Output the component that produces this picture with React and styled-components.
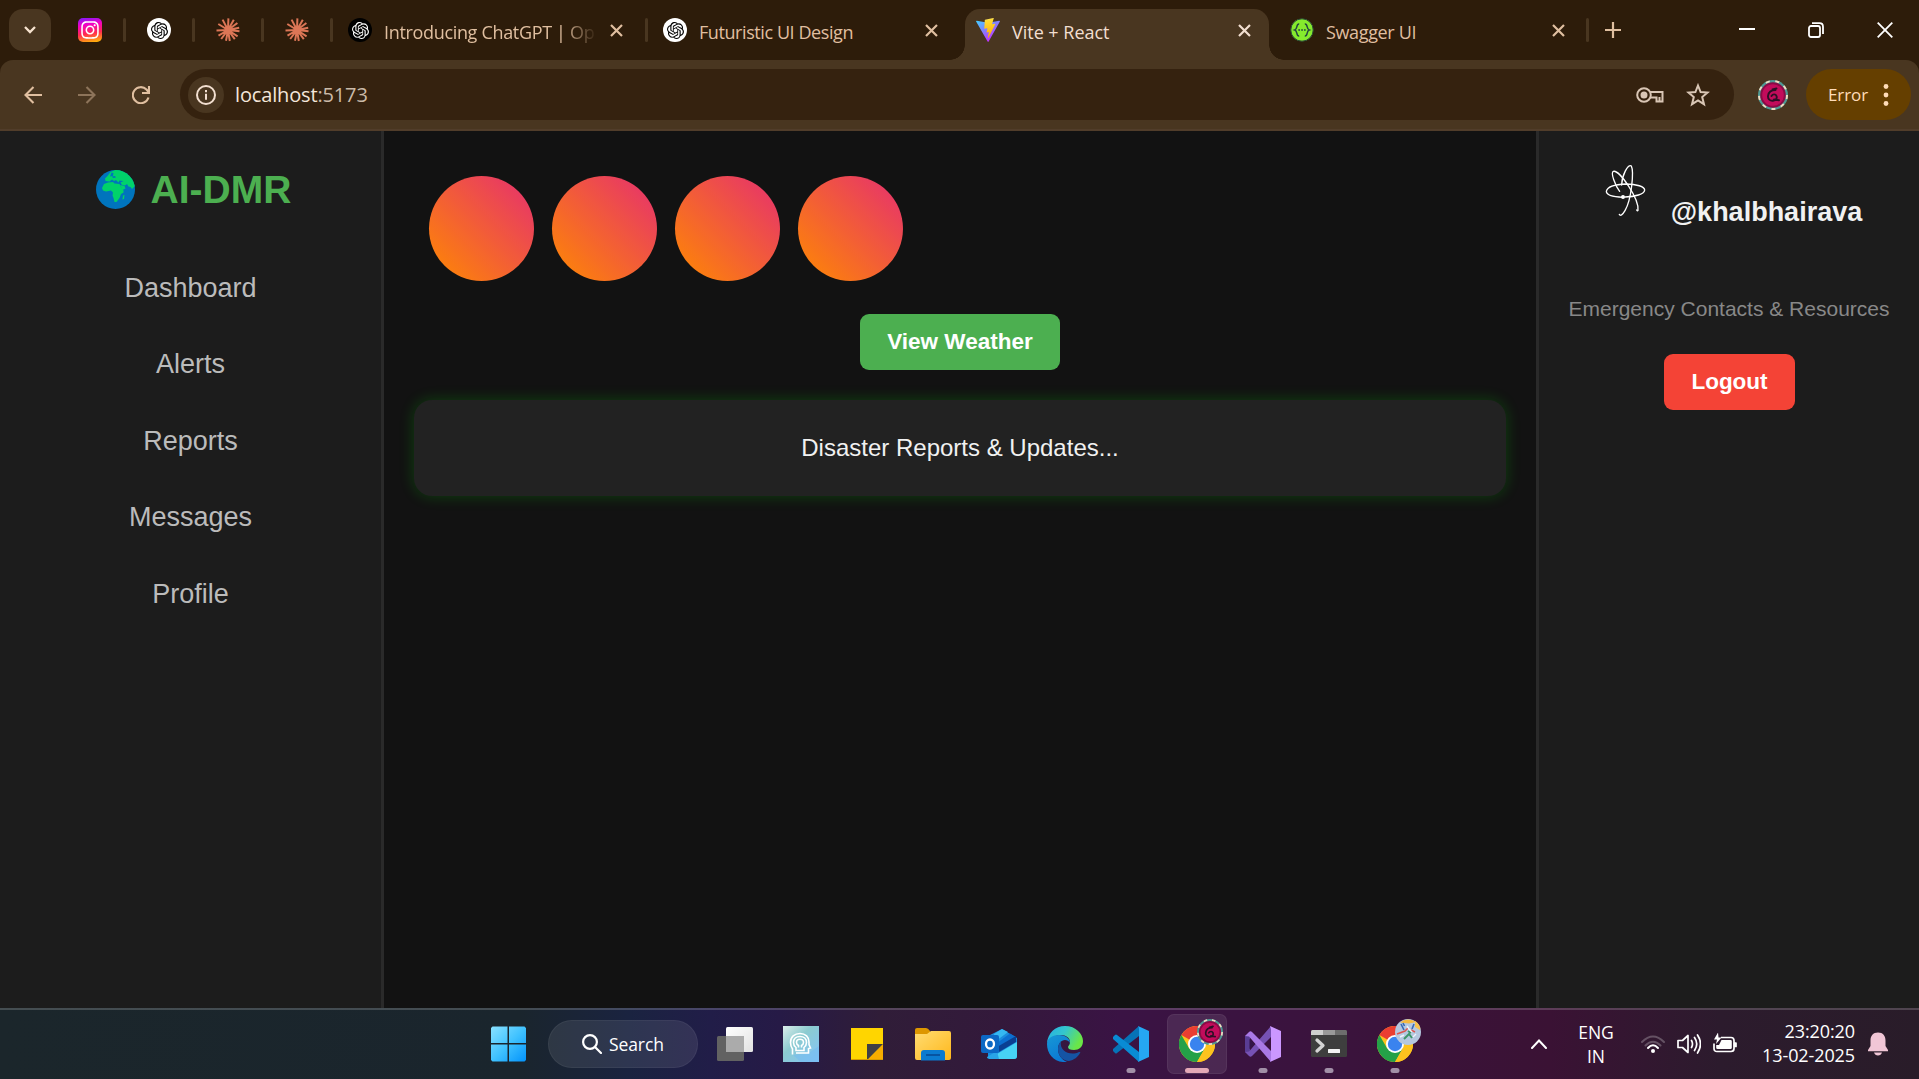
import React from "react";
import styled, { createGlobalStyle, css } from "styled-components";
import { SiOpenai } from "react-icons/si";
import { FaInstagram } from "react-icons/fa";

const GlobalStyle = createGlobalStyle`
  * { box-sizing: border-box; }
  html, body, #root { height: 100%; margin: 0; }
  body { overflow: hidden; background: #121212; }
  svg { display: block; flex: none; }
  h1, h2, p { margin: 0; }
`;

const systemFont = css`
  font-family: "Open Sans", "Noto Sans", sans-serif;
`;

const Screen = styled.div`
  width: 1919px;
  height: 1079px;
  display: flex;
  flex-direction: column;
  font-family: "Liberation Sans", Arial, sans-serif;
`;

/* ---------- Browser ---------- */

const TabStrip = styled.div`
  ${systemFont}
  height: 60px;
  flex: none;
  display: flex;
  align-items: center;
  padding-left: 9px;
  background: #2d1c0a;
  color: #e0bfa0;
`;

const TabSearch = styled.div`
  width: 42px;
  height: 42px;
  margin-right: 6px;
  border-radius: 14px;
  background: #493620;
  display: flex;
  align-items: center;
  justify-content: center;
`;

const Separator = styled.span`
  width: 3px;
  height: 24px;
  margin-left: auto;
  border-radius: 2px;
  background: #493620;
`;

const PinnedTab = styled.div`
  width: 69px;
  height: 100%;
  padding-left: 21px;
  display: flex;
  align-items: center;
`;

const Tab = styled.div`
  width: ${(p) => p.$width}px;
  height: 51px;
  margin-top: 9px;
  padding: 0 0 9px ${(p) => p.$pad}px;
  display: flex;
  align-items: center;
  position: relative;
  ${(p) =>
    p.$active &&
    css`
      background: #493620;
      color: #f2dfd0;
      border-radius: 15px 15px 0 0;
      &::before,
      &::after {
        content: "";
        position: absolute;
        bottom: 0;
        width: 15px;
        height: 15px;
      }
      &::before {
        left: -15px;
        background: radial-gradient(circle at 0 0, transparent 14.5px, #493620 15px);
      }
      &::after {
        right: -15px;
        background: radial-gradient(circle at 100% 0, transparent 14.5px, #493620 15px);
      }
    `}
`;

const TabTitle = styled.span`
  width: 211px;
  margin: 3px 15px 0 12px;
  font-size: 18px;
  line-height: 24px;
  letter-spacing: ${(p) => p.$spacing}px;
  white-space: nowrap;
  ${(p) => p.$fade && css`mask-image: linear-gradient(to right, #000 84%, transparent 101%);`}
`;

const Favicon = styled.span`
  width: 24px;
  height: 24px;
  flex: none;
  border-radius: ${(p) => p.$radius || "50%"};
  background: ${(p) => p.$bg || "none"};
  color: ${(p) => p.$fg || "#000"};
  display: flex;
  align-items: center;
  justify-content: center;
`;

const NewTab = styled.div`
  margin-left: 16px;
`;

const WindowControls = styled.div`
  margin-left: auto;
  padding-right: 26px;
  display: flex;
  align-items: center;
  gap: 53px;
`;

const ToolbarBack = styled.div`
  background: #2d1c0a;
  flex: none;
`;

const Toolbar = styled.div`
  ${systemFont}
  height: 71px;
  padding: 9px 8px 0 24px;
  display: flex;
  align-items: flex-start;
  border-radius: 13px 13px 0 0;
  box-shadow: inset 0 -2px #513d2a;
  background: #493620;
  color: #e0bfa0;
`;

const NavButtons = styled.div`
  width: 156px;
  height: 51px;
  display: flex;
  align-items: center;
  gap: 36px;
`;

const AddressBar = styled.div`
  width: 1554px;
  height: 51px;
  padding: 0 24px 0 8px;
  border-radius: 26px;
  background: #35220f;
  display: flex;
  align-items: center;
`;

const SiteInfo = styled.div`
  width: 36px;
  height: 36px;
  margin-right: 11px;
  border-radius: 50%;
  background: #493620;
  display: flex;
  align-items: center;
  justify-content: center;
`;

const Url = styled.span`
  flex: 1;
  font-size: 20px;
  letter-spacing: -0.15px;
  color: #f4e6da;
  span { color: #cbbba9; }
`;

const AddressIcons = styled.div`
  display: flex;
  align-items: center;
  gap: 22px;
`;

const ProfileSlot = styled.div`
  width: 72px;
  height: 51px;
  padding-left: 5px;
  display: flex;
  align-items: center;
  justify-content: center;
`;

const ErrorPill = styled.div`
  width: 105px;
  height: 51px;
  padding: 0 22px 0 22px;
  border-radius: 26px;
  background: #653f00;
  color: #ffdcb8;
  display: flex;
  align-items: center;
  justify-content: space-between;
  font-size: 17px;
  letter-spacing: -0.1px;
`;

/* ---------- Page ---------- */

const Page = styled.div`
  height: 877px;
  flex: none;
  display: grid;
  grid-template-columns: 384px 1fr 383px;
  background: #121212;
  color: #f1f1f1;
`;

const Sidebar = styled.aside`
  background: #1c1c1c;
  border-right: 3px solid #2a2a2a;
  padding-top: 36px;
  display: flex;
  flex-direction: column;
  align-items: center;
`;

const Brand = styled.h1`
  height: 45px;
  padding-left: 6px;
  display: flex;
  align-items: center;
  gap: 16px;
  font-size: 39px;
  line-height: 45px;
  color: #4caf50;
`;

const Menu = styled.nav`
  margin-top: 37.6px;
  display: flex;
  flex-direction: column;
  align-items: center;
`;

const MenuItem = styled.a`
  height: 76.6px;
  font-size: 27px;
  line-height: 76.6px;
  color: #bbbbbb;
`;

const Main = styled.main`
  padding: 45px 30px 0;
  display: flex;
  flex-direction: column;
`;

const Stories = styled.div`
  display: flex;
  gap: 18px;
  padding-left: 15px;
`;

const Story = styled.div`
  width: 105px;
  height: 105px;
  border-radius: 50%;
  background: linear-gradient(45deg, #ff8a00, #e52e71);
`;

const Button = styled.button`
  width: ${(p) => p.$width}px;
  height: 56px;
  align-self: center;
  padding: 0 0 1px;
  border: 0;
  border-radius: 9px;
  background: ${(p) => p.$color};
  color: #fff;
  font: bold 22.5px "Liberation Sans", Arial, sans-serif;
  margin: ${(p) => p.$margin};
`;

const ReportCard = styled.section`
  height: 96px;
  border-radius: 18px;
  background: #222;
  box-shadow: 0 0 15px rgba(0, 255, 0, 0.2);
  text-align: center;
  font-size: 24px;
  line-height: 95px;
`;

const RightPanel = styled.aside`
  background: #1c1c1c;
  border-left: 3px solid #2a2a2a;
  padding-top: 33px;
  display: flex;
  flex-direction: column;
  align-items: center;
`;

const UserRow = styled.div`
  height: 66px;
  padding-left: 9px;
  display: flex;
  align-items: flex-start;
  gap: 24px;
`;

const Handle = styled.h2`
  margin-top: 33px;
  font-size: 27px;
  line-height: 31px;
`;

const Muted = styled.p`
  margin-top: 67px;
  font-size: 21px;
  line-height: 24px;
  color: #888;
`;

/* ---------- Taskbar ---------- */

const Taskbar = styled.div`
  ${systemFont}
  height: 71px;
  flex: none;
  display: flex;
  align-items: flex-start;
  padding: 4px 31px 0 476px;
  border-top: 2px solid rgba(255, 255, 255, 0.18);
  background: linear-gradient(
    to right,
    #1b262b 0, #1a252d 520px, #1a2340 630px, #211d48 710px, #261a46 780px,
    #301d38 880px, #33193b 1000px, #3a1344 1120px, #3a133c 1350px, #3a1234 1550px, #2c1b2d 1720px, #291c29 1919px
  );
  background-origin: border-box;
  color: #fff;
`;

const TaskItem = styled.div`
  width: 66px;
  height: 60px;
  display: flex;
  align-items: center;
  justify-content: center;
  position: relative;
  ${(p) =>
    p.$active &&
    css`
      &::before {
        content: "";
        position: absolute;
        inset: 0 3px;
        border-radius: 7px;
        border: 1px solid rgba(255, 255, 255, 0.06);
        background: rgba(255, 255, 255, 0.09);
      }
    `}
  ${(p) =>
    p.$dot &&
    css`
      &::after {
        content: "";
        position: absolute;
        bottom: 1px;
        left: 50%;
        transform: translateX(-50%);
        width: ${p.$active ? 24 : 9}px;
        height: 5px;
        border-radius: 3px;
        background: ${p.$active ? "#e3a9b7" : "#a18fa7"};
      }
    `}
  > svg { position: relative; }
`;

const BadgeSlot = styled.span`
  position: absolute;
  top: 5px;
  right: 7px;
`;

const SearchPill = styled.div`
  width: 150px;
  height: 48px;
  margin: 6px 4px 0 6px;
  padding-left: 33px;
  border-radius: 24px;
  border: 1px solid rgba(255, 255, 255, 0.05);
  background: rgba(255, 255, 255, 0.09);
  display: flex;
  align-items: center;
  gap: 7px;
  font-size: 17.500px;
  letter-spacing: -0.1px;
`;

const Tray = styled.div`
  height: 60px;
  margin-left: auto;
  display: flex;
  align-items: center;
`;

const TrayText = styled.div`
  width: ${(p) => p.$width}px;
  text-align: ${(p) => p.$align};
  font-size: ${(p) => p.$size}px;
  line-height: 24px;
  letter-spacing: ${(p) => p.$spacing}px;
  white-space: nowrap;
  margin: 0 ${(p) => p.$right}px ${(p) => p.$bottom}px ${(p) => p.$left}px;
`;

const TrayIcons = styled.div`
  display: flex;
  gap: 12px;
  align-items: center;
`;

/* ---------- Icons ---------- */

const Stroke = ({ w, h, box, width = 2, children, color = "currentColor", ...rest }) => (
  <svg width={w} height={h} viewBox={box || `0 0 ${w} ${h}`} fill="none" stroke={color} strokeWidth={width} {...rest}>
    {children}
  </svg>
);

const CloseIcon = () => (
  <Stroke w={13} h={13} width={2.2}><path d="M1 1 12 12M12 1 1 12" /></Stroke>
);

const ClaudeIcon = () => (
  <svg width="24" height="24" viewBox="-12 -12 24 24" stroke="#dc7656" strokeWidth="2">
    <path d="M0 0 .4-11.6M0 0 5.8-10.2M0 0 9.4-7M0 0 11.2-2.2M0 0 11.5 1.3M0 0 9.6 6.3M0 0 6.8 9.2M0 0 1.8 11M0 0-2 10.7M0 0-6.8 9M0 0-9.5 5.7M0 0-11.5.4M0 0-9.7-6M0 0-5.4-10.4" />
    <circle r="3.4" fill="#dc7656" stroke="none" />
  </svg>
);

const ViteIcon = () => (
  <svg width="24" height="24" viewBox="0 0 256 257">
    <defs>
      <linearGradient id="viteBlue" x1="0" y1="0" x2=".6" y2=".9"><stop offset="0" stopColor="#41d1ff" /><stop offset="1" stopColor="#bd34fe" /></linearGradient>
      <linearGradient id="viteGold" x1=".4" y1="0" x2=".5" y2="1"><stop offset="0" stopColor="#ffea83" /><stop offset=".1" stopColor="#ffdd35" /><stop offset="1" stopColor="#ffa800" /></linearGradient>
    </defs>
    <path fill="url(#viteBlue)" d="M255.2 37.9 134.9 252.9c-2.5 4.4-8.9 4.5-11.4 0L.9 37.9c-2.7-4.8 1.4-10.6 6.8-9.6l120.4 21.5c.8.1 1.6.1 2.3 0l117.9-21.5c5.4-1 9.6 4.8 6.9 9.6Z" />
    <path fill="url(#viteGold)" d="M185.4.1 96.4 17.5a3.3 3.3 0 0 0-2.6 3l-5.5 92.5a3.3 3.3 0 0 0 4 3.4l24.8-5.7c2.3-.5 4.4 1.5 3.9 3.8l-7.4 36.1c-.5 2.4 1.8 4.5 4.1 3.8l15.4-4.7c2.3-.7 4.6 1.4 4.1 3.8l-11.7 56.8c-.7 3.6 4 5.5 6 2.5l1.4-2.1 72.6-144.9c1.2-2.4-.9-5.2-3.6-4.7l-25.5 4.9c-2.4.5-4.4-1.7-3.8-4.1L189.2 4.2c.7-2.3-1.4-4.6-3.8-4.1Z" />
  </svg>
);

const SwaggerIcon = () => (
  <svg width="24" height="24" viewBox="0 0 24 24">
    <circle cx="12" cy="12" r="11.2" fill="#85ea2d" stroke="#2b4a3a" strokeWidth="1" />
    <path d="M9.2 6C6 5.600 7.800 11 4.800 12 7.800 13 6 18.400 9.200 18M14.800 6C18 5.600 16.200 11 19.200 12 16.200 13 18 18.400 14.800 18" fill="none" stroke="#24463f" strokeWidth="1.5" />
    <path d="M8.300 12h1.700M11.200 12h1.700M14 12h1.700" stroke="#24463f" strokeWidth="1.500" />
  </svg>
);

const CrimsonAvatar = ({ size }) => (
  <svg width={size} height={size} viewBox="0 0 30 30">
    <circle cx="15" cy="15" r="15" fill="#4f9a94" />
    <circle cx="15" cy="15" r="14" fill="none" stroke="#f1dcc2" strokeWidth="2" strokeDasharray="4 5.7" />
    <circle cx="15" cy="15" r="12.8" fill="#8a0b45" />
    <circle cx="15" cy="15" r="10.8" fill="#c20c5b" />
    <path d="M17.500 10c-4 0-7 2-7.500 6-.3 3 2 5 5 4.700 3-.3 4.300-2.500 3.500-4.700-.8-2-3.700-2.200-5 0M16 19.500l5 .8M14.500 9.500l4-1" fill="none" stroke="#2b1025" strokeWidth="1.900" strokeLinecap="round" />
  </svg>
);

const GlobeIcon = () => (
  <svg width="39" height="39" viewBox="0 0 39 39">
    <defs><clipPath id="globeDisc"><circle cx="19.5" cy="19.5" r="19.5" /></clipPath></defs>
    <g clipPath="url(#globeDisc)">
      <rect width="39" height="39" fill="#0074bd" />
      <path fill="#00d26a" d="M9.500 11 9 8.500 11.500 6l3-4 6-2.500H39V16l-3 3-1.500-2-2-.5-1.500-2.500-2 1.500-3-.5-1.500-2.500 3-1.500-4-.5-1 2-2.500-2.500-2 1-2-1.500-2.500 2Z" />
      <path fill="#0074bd" d="m14 6.500 1.500-4 2 .5-.5 3ZM16 6.500l3-.5 1 1.500-3 .5Z" />
      <path fill="#00d26a" d="M6 18 8 14 12 12.500 17 12l1.500 1.500 5 .5 1.500 3 2.500 3.500v2L25 24l-1.500 4-3 4h-2L17.500 28 16.500 25.500 17 22.500 15 20.500l-5 1-3-1Z" />
      <path fill="#00d26a" d="m24 15 2.500 5 3-1.500-1-2.500Z" />
      <path fill="#00d26a" d="m27 25.500 1.500-.5-.5 4-1.500.5Z" />
    </g>
  </svg>
);

const ScribbleIcon = () => (
  <svg width="42" height="54" viewBox="255 100 126 162" fill="none" stroke="#fff" strokeWidth="4" strokeLinecap="round">
    <path d="M299 182C286 166 271 126 280 122 298 116 358 205 354 239Q352 242 350 238" />
    <path d="M305 163C305 136 324 98 334 106 342 122 335 205 315 240Q303 260 298 251" />
    <path d="M309 200C281 199 259 194 259 182 262 168 288 161 318 160 350 160 374 168 374 178 373 191 345 198 315 199" />
    <circle cx="309" cy="199" r="4" fill="#fff" />
  </svg>
);

const WindowsIcon = () => (
  <svg width="36" height="36" viewBox="0 0 36 36">
    <defs><linearGradient id="winBlue" gradientUnits="userSpaceOnUse" x1="0" y1="0" x2="36" y2="36"><stop offset="0" stopColor="#8be2ff" /><stop offset=".5" stopColor="#40c2ff" /><stop offset="1" stopColor="#0091fb" /></linearGradient></defs>
    <path fill="url(#winBlue)" d="M1.500.500h15v16.500H0V2ZM18 .500h15.500L35 2v15H18ZM0 18.500h16.500v17h-15L0 34ZM18 18.500h17V34l-1.500 1.500H18Z" />
  </svg>
);

const TaskViewIcon = () => (
  <svg width="36" height="36" viewBox="0 0 36 36">
    <defs><linearGradient id="tvWhite" x2="1" y2="1"><stop stopColor="#fff" /><stop offset="1" stopColor="#e2e2e2" /></linearGradient></defs>
    <rect x="0" y="10" width="27" height="25" rx="1.5" fill="#626262" />
    <rect x="9" y="1" width="27" height="25" rx="1.5" fill="url(#tvWhite)" />
    <path d="M9 10h18v16H9Z" fill="#ababab" />
  </svg>
);

const HeadIcon = () => (
  <svg width="36" height="36" viewBox="0 0 36 36">
    <defs><linearGradient id="headBg" x1="0" y1="0" x2="1" y2="1"><stop stopColor="#dceeea" /><stop offset=".4" stopColor="#8ccbd0" /><stop offset="1" stopColor="#83c3fa" /></linearGradient></defs>
    <rect width="36" height="36" fill="url(#headBg)" />
    <path d="m10 29 8 7h18V20l-10 7Z" fill="#72baf2" opacity=".5" />
    <g fill="none" stroke="#fff" strokeWidth="1.600">
      <path d="M9.500 28.500V23Q7.500 20 7.500 16.500C7.500 11 11.500 7.500 17 7.500S26 11 26 16v2.500l1.500 3.500-2 .5v4.500H13" />
      <path d="M13 24.500V21.500Q10.500 19.500 10.500 16.500C10.500 13 13 10.500 17 10.500S23.500 13 23.500 16.500Q23.500 19.500 21 21.500V24.500ZM15.500 21.500V19.500Q13.500 18.500 13.500 16.500C13.500 14.500 15 13.300 17 13.300S20.500 14.500 20.500 16.500Q20.500 18.500 18.500 19.500V21.500" />
    </g>
  </svg>
);

const StickyIcon = () => (
  <svg width="36" height="36" viewBox="0 0 36 36">
    <path d="M2 2h32v17L18 34H2Z" fill="#ffd500" />
    <path d="M34 18v16H18Z" fill="#f6ad00" />
    <path d="M18 18h16L18 34Z" fill="#404044" />
    <path d="M2 33h32v1H2Z" fill="#d79b00" />
  </svg>
);

const FolderIcon = () => (
  <svg width="36" height="36" viewBox="0 0 36 36">
    <defs><linearGradient id="folderY" x2="1" y2="1"><stop stopColor="#ffdc72" /><stop offset="1" stopColor="#ffb81c" /></linearGradient></defs>
    <path d="M0 4q0-2 2-2h9q2 0 4 3l1 5H0Z" fill="#dd9700" />
    <path d="M0 8h12l4-3h18q2 0 2 2v25q0 2-2 2H2q-2 0-2-2Z" fill="url(#folderY)" />
    <path d="M6 34.500V27q0-3 3-3h18q3 0 3 3v7.500Z" fill="#0b7bd0" />
    <path d="M11 29h14" stroke="#07519c" strokeWidth="1.800" />
  </svg>
);

const OutlookIcon = () => (
  <svg width="36" height="36" viewBox="0 0 36 36">
    <path d="m7 10 14-7 15 9v18q0 3-3 3H10q-3 0-3-3Z" fill="#1b8ddd" />
    <path d="m13 8 8-5 6 3-12 9Z" fill="#35b8f1" />
    <path d="m16 17 13-9.500 6 3.500-17 11Z" fill="#0c6fd0" />
    <path d="m16 21 19-11v6L18 26Z" fill="#0a3f92" />
    <path d="m16 28 20-12v14q0 3-3 3H10Z" fill="#47d3f5" />
    <path d="M6 31q0 2 4 2h8l-2-8Z" fill="#29a5e7" />
    <rect y="9" width="18" height="18" rx="2" fill="#0c68c4" />
    <ellipse cx="9" cy="18" rx="4" ry="4.500" fill="none" stroke="#fff" strokeWidth="2.300" />
  </svg>
);

const EdgeIcon = () => (
  <svg width="36" height="36" viewBox="0 0 36 36">
    <defs>
      <linearGradient id="edgeTop" x2="1" y2=".4"><stop stopColor="#25aee5" /><stop offset=".5" stopColor="#34c6cd" /><stop offset="1" stopColor="#6ae647" /></linearGradient>
      <linearGradient id="edgeSide" x2=".5" y2="1"><stop stopColor="#1798d5" /><stop offset="1" stopColor="#0b78d4" /></linearGradient>
    </defs>
    <path d="M0 17C1 7 8 0 18 0c11 0 18 8 18 15 0 6-4 9-9 9-4 0-6-1-6-3 0-1 2-2 2-5 0-4-4-7-9-7C7 9 2 13 0 17Z" fill="url(#edgeTop)" />
    <path d="M0 18c0-6 6-9 12-9 7 0 11 4 11 8-1-2-3-3-5-3-4 0-7 4-7 9 0 6 4 11 9 13C8 37 0 29 0 18Z" fill="url(#edgeSide)" />
    <path d="M14 15c-2 2-3 5-3 8 0 7 5 12 11 12 5-1 9-4 11-8 1-1 0-1-1-1-8 4-20 0-18-11Z" fill="#1554a4" />
  </svg>
);

const VSCodeIcon = () => (
  <svg width="36" height="36" viewBox="0 0 36 36">
    <path d="M26 0v10L4 27q-1 1-2 0l-2-2q-1-1 0-2Z" fill="#0673b7" />
    <path d="M26 36V26L4 9Q3 8 2 9l-2 2q-1 1 0 2Z" fill="#098bd4" />
    <path d="M25 0 36 5v26l-11 5q1-1 1-3V3q0-2-1-3Z" fill="#25a7f2" />
  </svg>
);

const ChromeIcon = () => (
  <svg width="36" height="36" viewBox="0 0 36 36">
    <circle cx="18" cy="18" r="18" fill="#fcc31e" />
    <path d="M18 18 2.400 9A18 18 0 0 1 33.600 9Z" fill="#ea3e32" />
    <path d="M2.400 9 10.200 22.500 18 27v9A18 18 0 0 1 2.400 9Z" fill="#24a148" />
    <path d="M25.800 22.500 18 36 14 26Z" fill="#24a148" />
    <path d="M25.800 22.500 18 36A18 18 0 0 0 33.600 9H18Z" fill="#fcc31e" />
    <circle cx="18" cy="18" r="9" fill="#fff" />
    <circle cx="18" cy="18" r="7.200" fill="#3a83ef" />
  </svg>
);

const DoodleAvatar = () => (
  <svg width="26" height="26" viewBox="0 0 26 26">
    <circle cx="13" cy="13" r="13" fill="#b5c8e0" />
    <path d="M5 3.500A13 13 0 0 1 21 3L14 4.500Z" fill="#f6b93c" />
    <path d="M20 2q6 4 5 9l-5-3Z" fill="#f7c14e" />
    <path d="m6 5 3 6M19 5l-2 5M8 4l1.500 3" fill="none" stroke="#3769b4" strokeWidth="1.600" />
    <path d="m2 15 8-3 3-3M16 11l4 2" fill="none" stroke="#dd5650" strokeWidth="1.500" />
    <path d="m9 20 5-5 3 4M13 12l3 2" fill="none" stroke="#3d9668" strokeWidth="1.900" />
    <path d="m12 7 2 3 3 3M18 18l3-3M5 18l4-2" fill="none" stroke="#eef3fa" strokeWidth="1.400" />
  </svg>
);

const VisualStudioIcon = () => (
  <svg width="36" height="36" viewBox="0 0 36 36">
    <path d="M0 10 4 8 5 10v16l-1 2-4-2Z" fill="#593d94" />
    <path d="M26 0v11L7 30q-1.500 1.500-3 0L0 26l4-.5Z" fill="#7652b4" />
    <path d="M0 10 4 6q1.500-1.500 3 0l19 19v11L4 10.500Z" fill="#a979e5" />
    <path d="M25 0 36 5v26l-11 5q1-1 1-3V3Z" fill="#cb97ff" />
    <path d="m4.500 13 5 5-5 5Z" fill="#321548" />
  </svg>
);

const TerminalIcon = () => (
  <svg width="36" height="36" viewBox="0 0 36 36">
    <rect y="4" width="36" height="27" rx="1.5" fill="#3e3e3e" />
    <path d="M0 9V5.500Q0 4 1.500 4H12v5Z" fill="#cfcfcf" />
    <path d="M12 4h12v5H12Z" fill="#999" />
    <path d="M24 4h10.500Q36 4 36 5.500V9H24Z" fill="#6d6d6d" />
    <path d="m6 14 6 5.500L6 25" fill="none" stroke="#d5d5d5" strokeWidth="3.300" strokeLinecap="round" strokeLinejoin="round" />
    <rect x="17" y="23" width="12" height="4" rx=".5" fill="#f3f3f3" />
  </svg>
);

const WifiIcon = () => (
  <Stroke w={24} h={20} width={2} strokeLinecap="round">
    <path d="M1 8Q12-3 23 8M4.500 11.500Q12 4 19.500 11.500" opacity=".25" />
    <path d="M7 14Q12 8.500 17 14" />
    <circle cx="12" cy="17" r="2" fill="#fff" stroke="none" />
  </Stroke>
);

const SpeakerIcon = () => (
  <Stroke w={24} h={22} width={1.7} strokeLinejoin="round" strokeLinecap="round">
    <path d="M1 7.500h4.500L11 2.500v17l-5.500-5H1ZM14.500 7.500q2 3.500 0 7M17.500 4.500q4.500 6.500 0 13M20.500 2q6 9 0 18" />
  </Stroke>
);

const BatteryIcon = () => (
  <Stroke w={24} h={22} width={1.7} strokeLinejoin="round">
    <path d="M8 4.500h10q3 0 3 3v8q0 3-3 3H4q-3 0-3-3v-5" />
    <path d="M8.500 7H17.500q1.300 0 1.300 1.300v6.400q0 1.300-1.300 1.300h-13q-1.300 0-1.300-1.300v-2.700H6Z" fill="#fff" stroke="none" />
    <path d="M21.500 10H23v3.500h-1.500Z" fill="#fff" />
    <path d="M5 -.5 1 6.500H4L3 11l5.500-6.500H5.500Z" fill="#fff" stroke="none" />
  </Stroke>
);

const BellIcon = () => (
  <svg width="20" height="24" viewBox="0 0 20 24" fill="#f1c6d6">
    <path d="M10 .5c-5 0-7.500 3.500-7.500 8V14L0 18v1.200h20V18l-2.500-4V8.500c0-4.500-2.500-8-7.500-8ZM6 20.500h8q-1 3-4 3t-4-3Z" />
  </svg>
);

const pinned = [
  <Favicon $radius="5px" $fg="#fff" $bg="linear-gradient(170deg, #7a1bff 0%, #f400c4 30%, #ff2a50 62%, #ffc400 100%)"><FaInstagram size={20} /></Favicon>,
  <Favicon $bg="#fff"><SiOpenai size={17} /></Favicon>,
  <ClaudeIcon />,
  <ClaudeIcon />,
];

const menu = ["Dashboard", "Alerts", "Reports", "Messages", "Profile"];

const Browser = () => (
  <>
    <TabStrip>
      <TabSearch>
        <Stroke w={12} h={8} color="#f7e3cf" width={2.3}><path d="m1 1 5 5 5-5" /></Stroke>
      </TabSearch>
      {pinned.map((icon, i) => (
        <PinnedTab key={i}>{icon}<Separator /></PinnedTab>
      ))}
      <Tab $width={315} $pad={15}>
        <Favicon $bg="#000" $fg="#fff"><SiOpenai size={17} /></Favicon>
        <TabTitle $spacing={-0.33} $fade>Introducing ChatGPT | Ope</TabTitle>
        <CloseIcon />
        <Separator />
      </Tab>
      <Tab $width={317} $pad={15}>
        <Favicon $bg="#fff"><SiOpenai size={17} /></Favicon>
        <TabTitle $spacing={-0.42}>Futuristic UI Design</TabTitle>
        <CloseIcon />
      </Tab>
      <Tab $width={304} $pad={11} $active>
        <ViteIcon />
        <TabTitle $spacing={-0.02}>Vite + React</TabTitle>
        <CloseIcon />
      </Tab>
      <Tab $width={320} $pad={21}>
        <SwaggerIcon />
        <TabTitle $spacing={-0.35}>Swagger UI</TabTitle>
        <CloseIcon />
        <Separator />
      </Tab>
      <NewTab>
        <Stroke w={16} h={16} width={2.2}><path d="M8 0v16M0 8h16" /></Stroke>
      </NewTab>
      <WindowControls>
        <Stroke w={16} h={16} color="#fff"><path d="M0 7h16" /></Stroke>
        <Stroke w={16} h={16} color="#fff" width={1.8}>
          <rect x="1" y="4" width="11" height="11" rx="2" />
          <path d="M4 1.200h7.500q3.500 0 3.500 3.500V12" />
        </Stroke>
        <Stroke w={16} h={16} color="#fff" width={1.8}><path d="m.7.7 14.600 14.600M15.300.7.7 15.300" /></Stroke>
      </WindowControls>
    </TabStrip>
    <ToolbarBack>
      <Toolbar>
        <NavButtons>
          <Stroke w={18} h={18} width={2.1}><path d="M18 9H1.500M9.500 1 1.500 9l8 8" /></Stroke>
          <Stroke w={18} h={18} width={2.1} opacity=".45"><path d="M0 9h16.500M8.500 1l8 8-8 8" /></Stroke>
          <Stroke w={18} h={18} width={2.1}><path d="M16.500 11.500A8 8 0 1 1 14.500 3.500L16.500 6M17 0v7h-7" /></Stroke>
        </NavButtons>
        <AddressBar>
          <SiteInfo>
            <Stroke w={20} h={20} color="#f2dfd0"><circle cx="10" cy="10" r="9" /><path d="M10 8.800v6M10 5v2.200" /></Stroke>
          </SiteInfo>
          <Url>localhost<span>:5173</span></Url>
          <AddressIcons>
            <Stroke w={28} h={16} color="#d9c6b5" width={2}>
              <circle cx="8" cy="8" r="6.800" /><circle cx="8" cy="8" r="2.500" fill="#d9c6b5" />
              <path d="M14 5h12.500v9.500h-6V10.500h-6M23.500 10v4" />
            </Stroke>
            <Stroke w={24} h={24} color="#d9c6b5" width={2}>
              <path d="m12 2.500 2.600 6.500 7 .5-5.400 4.600 1.800 7.100L12 17.400l-6 3.800 1.800-7.100L2.400 9.500 9.400 9Z" />
            </Stroke>
          </AddressIcons>
        </AddressBar>
        <ProfileSlot><CrimsonAvatar size={30} /></ProfileSlot>
        <ErrorPill>
          Error
          <svg width="6" height="22" viewBox="0 0 6 22" fill="#ffdcb8"><circle cx="3" cy="2.500" r="2.400" /><circle cx="3" cy="11" r="2.400" /><circle cx="3" cy="19.500" r="2.400" /></svg>
        </ErrorPill>
      </Toolbar>
    </ToolbarBack>
  </>
);

const apps = [
  { icon: <TaskViewIcon /> },
  { icon: <HeadIcon /> },
  { icon: <StickyIcon /> },
  { icon: <FolderIcon /> },
  { icon: <OutlookIcon /> },
  { icon: <EdgeIcon /> },
  { icon: <VSCodeIcon />, dot: true },
  { icon: <ChromeIcon />, dot: true, active: true, badge: <CrimsonAvatar size={26} /> },
  { icon: <VisualStudioIcon />, dot: true },
  { icon: <TerminalIcon />, dot: true },
  { icon: <ChromeIcon />, dot: true, badge: <DoodleAvatar /> },
];

export default function App() {
  return (
    <Screen>
      <GlobalStyle />
      <Browser />
      <Page>
        <Sidebar>
          <Brand><GlobeIcon />AI-DMR</Brand>
          <Menu>
            {menu.map((m) => <MenuItem key={m}>{m}</MenuItem>)}
          </Menu>
        </Sidebar>
        <Main>
          <Stories>
            {[0, 1, 2, 3].map((i) => <Story key={i} />)}
          </Stories>
          <Button $width={200} $color="#4caf50" $margin="33px 0 30px">View Weather</Button>
          <ReportCard>Disaster Reports &amp; Updates...</ReportCard>
        </Main>
        <RightPanel>
          <UserRow><ScribbleIcon /><Handle>@khalbhairava</Handle></UserRow>
          <Muted>Emergency Contacts &amp; Resources</Muted>
          <Button $width={131} $color="#f44336" $margin="33px 0 0 1px">Logout</Button>
        </RightPanel>
      </Page>
      <Taskbar>
        <TaskItem><WindowsIcon /></TaskItem>
        <SearchPill>
          <Stroke w={20} h={20} width={2.2} strokeLinecap="round"><circle cx="8" cy="8" r="6.900" /><path d="m13 13 6 6" /></Stroke>
          Search
        </SearchPill>
        {apps.map((a, i) => (
          <TaskItem key={i} $dot={a.dot} $active={a.active}>
            {a.icon}
            {a.badge && <BadgeSlot>{a.badge}</BadgeSlot>}
          </TaskItem>
        ))}
        <Tray>
          <Stroke w={16} h={10} strokeLinecap="round"><path d="m1 9 7-7.500L15 9" /></Stroke>
          <TrayText $width={60} $align="center" $size={17.5} $left={19} $right={15} $bottom={0} $spacing={-0.1}>ENG<br />IN</TrayText>
          <TrayIcons><WifiIcon /><SpeakerIcon /><BatteryIcon /></TrayIcons>
          <TrayText $width={105} $align="right" $size={18} $left={13} $right={13} $bottom={2} $spacing={-0.1}>23:20:20<br />13-02-2025</TrayText>
          <BellIcon />
        </Tray>
      </Taskbar>
    </Screen>
  );
}
